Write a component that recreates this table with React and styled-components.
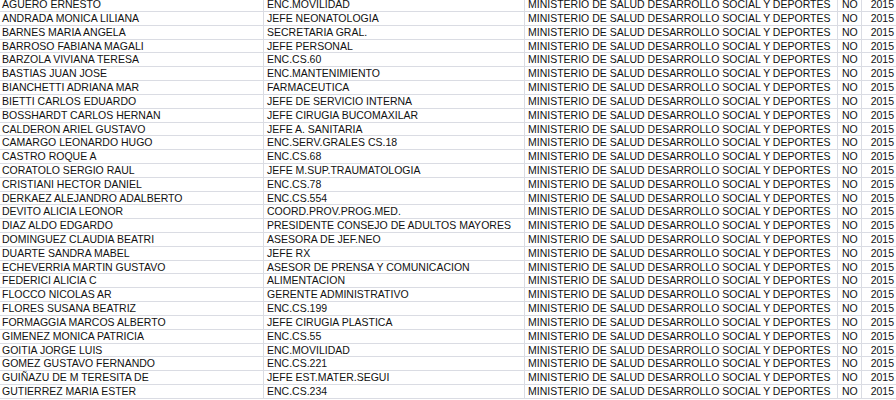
import React from 'react';
import styled, { createGlobalStyle } from 'styled-components';

const rows = [
    ['AGUERO ERNESTO', 'ENC.MOVILIDAD'],
    ['ANDRADA MONICA LILIANA', 'JEFE NEONATOLOGIA'],
    ['BARNES MARIA ANGELA', 'SECRETARIA GRAL.'],
    ['BARROSO FABIANA MAGALI', 'JEFE PERSONAL'],
    ['BARZOLA VIVIANA TERESA', 'ENC.CS.60'],
    ['BASTIAS JUAN JOSE', 'ENC.MANTENIMIENTO'],
    ['BIANCHETTI ADRIANA MAR', 'FARMACEUTICA'],
    ['BIETTI CARLOS EDUARDO', 'JEFE DE SERVICIO INTERNA'],
    ['BOSSHARDT CARLOS HERNAN', 'JEFE CIRUGIA BUCOMAXILAR'],
    ['CALDERON ARIEL GUSTAVO', 'JEFE A. SANITARIA'],
    ['CAMARGO LEONARDO HUGO', 'ENC.SERV.GRALES CS.18'],
    ['CASTRO ROQUE A', 'ENC.CS.68'],
    ['CORATOLO SERGIO RAUL', 'JEFE M.SUP.TRAUMATOLOGIA'],
    ['CRISTIANI HECTOR DANIEL', 'ENC.CS.78'],
    ['DERKAEZ ALEJANDRO ADALBERTO', 'ENC.CS.554'],
    ['DEVITO ALICIA LEONOR', 'COORD.PROV.PROG.MED.'],
    ['DIAZ ALDO EDGARDO', 'PRESIDENTE CONSEJO DE ADULTOS MAYORES'],
    ['DOMINGUEZ CLAUDIA BEATRI', 'ASESORA DE JEF.NEO'],
    ['DUARTE SANDRA MABEL', 'JEFE RX'],
    ['ECHEVERRIA MARTIN GUSTAVO', 'ASESOR DE PRENSA Y COMUNICACION'],
    ['FEDERICI ALICIA C', 'ALIMENTACION'],
    ['FLOCCO NICOLAS AR', 'GERENTE ADMINISTRATIVO'],
    ['FLORES SUSANA BEATRIZ', 'ENC.CS.199'],
    ['FORMAGGIA MARCOS ALBERTO', 'JEFE CIRUGIA PLASTICA'],
    ['GIMENEZ MONICA PATRICIA', 'ENC.CS.55'],
    ['GOITIA JORGE LUIS', 'ENC.MOVILIDAD'],
    ['GOMEZ GUSTAVO FERNANDO', 'ENC.CS.221'],
    ['GUIÑAZU DE M TERESITA DE', 'JEFE EST.MATER.SEGUI'],
    ['GUTIERREZ MARIA ESTER', 'ENC.CS.234'],
];

const GlobalStyle = createGlobalStyle`
    html, body {
        margin: 0;
        background: #fff;
        overflow: hidden;
    }
`;

const App = () => {
    return (
        <>
            <GlobalStyle />
            <Sheet>
                {rows.map(([name, role]) => (
                    <Row key={name}>
                        <Cell $pad={2}>{name}</Cell>
                        <Cell>{role}</Cell>
                        <Cell>MINISTERIO DE SALUD DESARROLLO SOCIAL Y DEPORTES</Cell>
                        <Cell $pad={4}>NO</Cell>
                        <Cell $right>2015</Cell>
                    </Row>
                ))}
            </Sheet>
        </>
    );
};

const Sheet = styled.div`
    width: 896px;
    height: 400px;
    overflow: hidden;
    font-family: 'Liberation Sans', Arial, sans-serif;
    font-size: 10.5px;
    color: #111;
`;

const Row = styled.div`
    display: grid;
    grid-template-columns: 264px 261px 313px 24px 36px;
    height: 13.82px;
    &:first-child {
        margin-top: -1.8px;
    }
`;

const Cell = styled.div`
    box-sizing: border-box;
    border-right: 1px solid #dadce3;
    border-bottom: 1px solid #dadce3;
    padding-left: ${(p) => (p.$pad !== undefined ? p.$pad : 3)}px;
    padding-right: ${(p) => (p.$right ? 3 : 0)}px;
    text-align: ${(p) => (p.$right ? 'right' : 'left')};
    line-height: 12.8px;
    white-space: nowrap;
    overflow: hidden;
`;

export default App;
